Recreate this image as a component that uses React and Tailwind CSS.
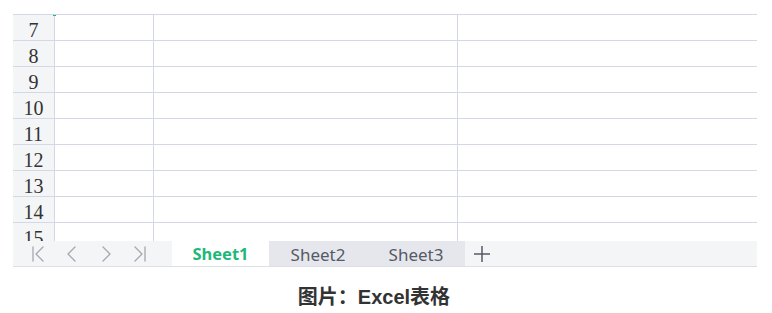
import React from "react";

const rows = [7, 8, 9, 10, 11, 12, 13, 14, 15];

function NavIcon({ type }) {
  const common = { fill: "none", stroke: "#a3a7b0", strokeWidth: 1.3, strokeLinecap: "round", strokeLinejoin: "round" };
  return (
    <svg width="16" height="18" viewBox="0 0 16 18">
      {type === "first" && (
        <g {...common}>
          <path d="M3 2v14" />
          <path d="M13 2L6 9l7 7" />
        </g>
      )}
      {type === "prev" && (
        <g {...common}>
          <path d="M11 2L4 9l7 7" />
        </g>
      )}
      {type === "next" && (
        <g {...common}>
          <path d="M5 2l7 7-7 7" />
        </g>
      )}
      {type === "last" && (
        <g {...common}>
          <path d="M3 2l7 7-7 7" />
          <path d="M13 2v14" />
        </g>
      )}
    </svg>
  );
}

export default function App() {
  return (
    <div className="w-[772px] h-[313px] bg-white pt-[14px] pl-[13px]">
      <div className="w-[744px]">
        <div className="relative h-[227px] overflow-hidden border-t border-[#d3d8e4]">
          <div className="absolute left-[40px] top-[-2px] w-[3px] h-[3px] bg-[#1fb87a]" />
          {rows.map((r) => (
            <div key={r} className="flex h-[26px] border-b border-[#d3d8e4]">
              <div
                className="w-[42px] shrink-0 bg-[#f4f5f7] border-r border-[#d3d8e4] flex items-center justify-center text-[20px] text-[#333] leading-none pt-[4px]"
                style={{ fontFamily: '"Liberation Serif", "DejaVu Serif", serif' }}
              >
                {r}
              </div>
              <div className="w-[99px] shrink-0 border-r border-[#d3d8e4]" />
              <div className="w-[304px] shrink-0 border-r border-[#d3d8e4]" />
              <div className="flex-1" />
            </div>
          ))}
        </div>
        <div
          className="flex h-[26px] bg-[#f4f5f7] border-b border-[#dcdfe6]"
          style={{ fontFamily: '"Noto Sans", "Open Sans", sans-serif' }}
        >
          <div className="w-[159px] shrink-0 flex items-center pl-[17px] gap-[18px]">
            <NavIcon type="first" />
            <NavIcon type="prev" />
            <NavIcon type="next" />
            <NavIcon type="last" />
          </div>
          <div className="w-[97px] shrink-0 bg-white flex items-center justify-center pt-[2px] text-[16.5px] font-bold text-[#1fb87a]">
            Sheet1
          </div>
          <div className="w-[98px] shrink-0 bg-[#e6e7ec] flex items-center justify-center pt-[2px] text-[17px] text-[#555a66]">
            Sheet2
          </div>
          <div className="w-[98px] shrink-0 bg-[#e6e7ec] flex items-center justify-center pt-[2px] text-[17px] text-[#555a66]">
            Sheet3
          </div>
          <div className="w-[34px] shrink-0 flex items-center justify-center">
            <svg width="18" height="18" viewBox="0 0 18 18">
              <path d="M9 1v16M1 9h16" stroke="#555a66" strokeWidth="1.5" />
            </svg>
          </div>
          <div className="flex-1" />
        </div>
      </div>
      <div
        className="mt-[20px] w-[722px] text-center text-[20px] font-bold text-[#333] leading-none"
        style={{ fontFamily: '"Liberation Sans", "Noto Sans CJK SC", sans-serif' }}
      >
        图片：Excel表格
      </div>
    </div>
  );
}
